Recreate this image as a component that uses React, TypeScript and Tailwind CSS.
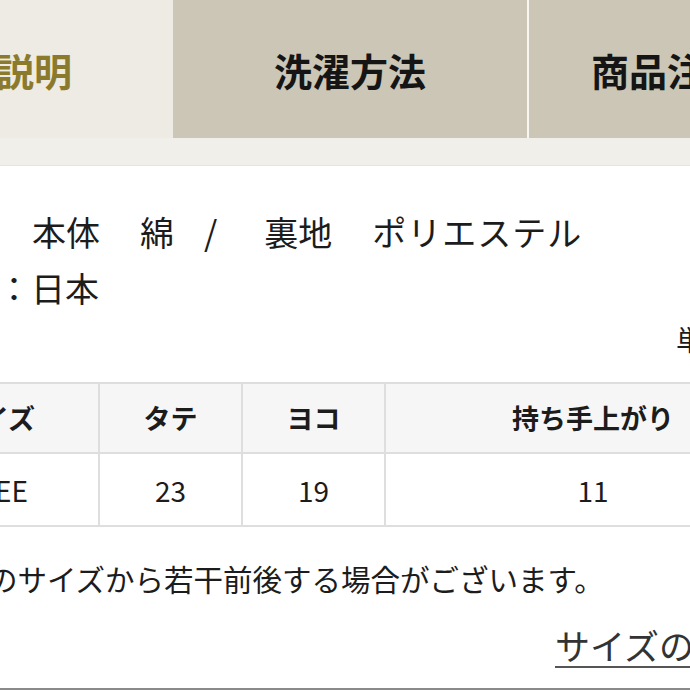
const font = { fontFamily: '"Noto Sans CJK JP", "Noto Sans", sans-serif' };

const tabs = [
  { label: "商品説明", active: true },
  { label: "洗濯方法", active: false },
  { label: "商品注意事項", active: false },
];

const head = ["サイズ", "タテ", "ヨコ", "持ち手上がり"];
const body = ["FREE", "23", "19", "11"];

export default function App() {
  return (
    <div className="w-[690px] h-[690px] overflow-hidden bg-white text-[#1c1c1c]" style={font}>
      {/* tabs */}
      <div className="flex h-[138px] -ml-[181px]">
        {tabs.map((t, i) => (
          <div
            key={t.label}
            className={`w-[354px] shrink-0 flex items-center justify-center text-[38px] font-bold whitespace-nowrap ${
              t.active ? "bg-[#eeebe5] text-[#8c7a2c]" : "bg-[#cbc6b5] text-[#151515]"
            } ${i === 2 ? "border-l-2 border-[#f7f5f0]" : ""}`}
          >
            {t.label}
          </div>
        ))}
      </div>
      <div className="h-[28px] bg-[#f1efea] border-b border-[#e4e4e4]" />

      {/* spec lines */}
      <div className="mt-[38px] flex items-center text-[34px] leading-[56px] whitespace-nowrap">
        <span className="ml-[32px]">本体</span>
        <span className="ml-[40px]">綿</span>
        <span className="ml-[30px]">/</span>
        <span className="ml-[47px]">裏地</span>
        <span className="ml-[40px] tracking-[1px]">ポリエステル</span>
      </div>
      <div className="text-[34px] leading-[56px] -ml-[3px] whitespace-nowrap">：日本</div>
      <div className="mt-[3px] pl-[676px] text-[28px] leading-[40px] whitespace-nowrap">単位：cm</div>

      {/* size table */}
      <div className="mt-[23px] -ml-[110px] grid grid-cols-[208px_143px_143px_416px] w-[910px] border-t-2 border-l-2 border-[#dedede]">
        {head.map((h) => (
          <div
            key={h}
            className="h-[70px] flex items-center justify-center bg-[#f6f6f6] border-r-2 border-b-2 border-[#dedede] text-[27px] font-bold whitespace-nowrap"
          >
            {h}
          </div>
        ))}
        {body.map((b, i) => (
          <div
            key={i}
            className="h-[73px] flex items-center justify-center bg-white border-r-2 border-b-2 border-[#dedede] text-[28px] whitespace-nowrap"
          >
            {b}
          </div>
        ))}
      </div>

      <div className="mt-[31px] -ml-[12px] text-[29.5px] leading-[40px] whitespace-nowrap">
        のサイズから若干前後する場合がございます。
      </div>
      <div className="mt-[27px] pl-[555px] text-[35px] leading-[40px] whitespace-nowrap">
        <span className="underline decoration-2 underline-offset-[6px] text-[#333] decoration-[#555]">
          サイズの測り方について
        </span>
      </div>
      <div className="mt-[23px] h-[2px] bg-[#8a8a8a]" />
    </div>
  );
}
